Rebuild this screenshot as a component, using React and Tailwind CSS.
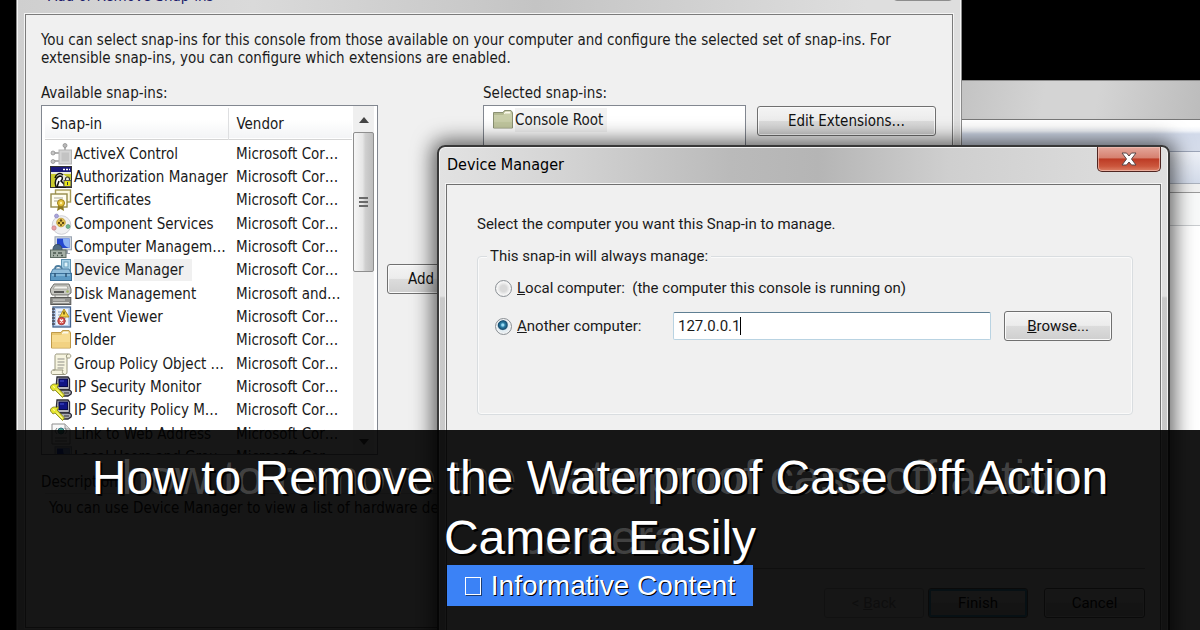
import React from "react";

const TAHOMA = "font-['DejaVu_Sans_Condensed','Noto_Sans',sans-serif]";
const DIALOG_FONT = "font-['Roboto','Liberation_Sans',sans-serif]";
const ARIAL = "font-['Liberation_Sans',Arial,sans-serif]";
const BUTTON =
  "rounded-[3px] border border-[#707070] bg-[linear-gradient(#f4f4f4_0%,#ececec_48%,#dcdcdc_50%,#cfcfcf_100%)] shadow-[inset_0_0_0_1px_#fafafa] text-[#111]";

function Icon({ children }) {
  return (
    <svg viewBox="0 0 22 22" className="h-[22px] w-[22px] shrink-0" aria-hidden="true">
      {children}
    </svg>
  );
}

function ActiveXIcon() {
  return (
    <Icon>
      <path d="M15 3v7M3 10h7M3 18h7" stroke="#9a9a9a" strokeWidth="1.5" />
      <circle cx="15" cy="2.5" r="2" fill="#b9b9b9" stroke="#888" strokeWidth=".7" />
      <circle cx="3" cy="10" r="2" fill="#c4c4c4" stroke="#888" strokeWidth=".7" />
      <circle cx="3" cy="18.500" r="2" fill="#c4c4c4" stroke="#888" strokeWidth=".7" />
      <rect x="9" y="7" width="12.500" height="14" fill="#d4d4d4" stroke="#b4b4b4" />
      <rect x="11.500" y="9.500" width="7.500" height="9" fill="#c3c3c3" />
    </Icon>
  );
}

function AuthorizationIcon() {
  return (
    <Icon>
      <rect x=".5" y=".5" width="21" height="21" fill="#e9e9df" stroke="#333" />
      <rect x="1" y="1" width="20" height="5" fill="#1b1a7a" />
      <path d="M13 3.500h2M16 3.500h2M19 3.500h1" stroke="#fff" strokeWidth="1.500" />
      <path d="M1 8h7l-3 6 1 7H1zM13 8h8v6l-4-3z" fill="#c9c92d" />
      <path d="M6 21c-2-5 0-10 4-11 3 0 3 3 1 5l3 3 1 3z" fill="#fff" stroke="#111" strokeWidth="1.500" />
      <path d="M5 12c1-4 5-6 8-3M9 15l-2 6" stroke="#111" strokeWidth="1.500" fill="none" />
      <path d="M15.500 15v-2a2 2 0 0 1 4 0v2" fill="none" stroke="#333" strokeWidth="1.200" />
      <rect x="14" y="14.500" width="7" height="6" fill="#e6e619" stroke="#555" />
      <path d="M17.500 16v3" stroke="#333" />
    </Icon>
  );
}

function CertificateIcon() {
  return (
    <Icon>
      <rect x="5.500" y="1" width="15" height="12" fill="#fdf9e2" stroke="#a59a55" strokeWidth="1.400" />
      <rect x="1" y="5" width="16" height="13" fill="#fffdf0" stroke="#958a4a" strokeWidth="1.400" />
      <path d="M4 9h9M4 12h5" stroke="#aaa89a" strokeWidth="1.200" />
      <path d="M8.500 15l-1.500 7 3.500-2 3.500 2-1-7z" fill="#8c7a22" />
      <circle cx="11" cy="14" r="3.500" fill="#e6c33c" stroke="#9a7d1a" />
      <circle cx="11" cy="14" r="1.200" fill="#fff0a0" />
    </Icon>
  );
}

function ComponentIcon() {
  return (
    <Icon>
      <circle cx="11.500" cy="12" r="9.300" fill="#f0f0f2" stroke="#cfcfd5" />
      <circle cx="11" cy="9.500" r="4.300" fill="#ecc955" stroke="#b8962f" strokeWidth=".8" />
      <circle cx="11" cy="7.500" r="1.200" fill="#5c4712" />
      <circle cx="9" cy="10" r="1.200" fill="#5c4712" />
      <circle cx="13" cy="10" r="1.200" fill="#5c4712" />
      <circle cx="11" cy="12" r="1" fill="#5c4712" />
      <circle cx="6.500" cy="3" r="2" fill="#aaa5da" stroke="#8780b8" strokeWidth=".6" />
      <circle cx="4" cy="15" r="2.200" fill="#e7a0a6" stroke="#c47880" strokeWidth=".6" />
      <circle cx="18" cy="13.500" r="2" fill="#70b58d" stroke="#4c8d68" strokeWidth=".6" />
    </Icon>
  );
}

function ComputerIcon() {
  return (
    <Icon>
      <rect x="5" y=".8" width="16.500" height="13" fill="#d3d9e1" stroke="#98a3b1" />
      <rect x="7" y="2.500" width="12.500" height="9.500" fill="#2446cf" />
      <path d="M13 2.500h6.500V12c-5-1-6.500-4-6.500-9.500z" fill="#8cb2f2" />
      <path d="M13 14h5v3h2v1h-7z" fill="#9da7b1" />
      <path d="M3 14c0-4 2-5.500 4.500-5.500S12 10 12 14" fill="#516b82" stroke="#34495d" />
      <rect x=".5" y="14" width="15.500" height="7.500" fill="#a5b0a6" stroke="#5d6b62" />
      <path d="M3 17h3M8 17h4M3 19.500h1M7 19.500h1M11 19.500h2" stroke="#48564d" strokeWidth="1.400" />
    </Icon>
  );
}

function DeviceIcon() {
  return (
    <Icon>
      <rect x="11.500" y=".5" width="9" height="14" fill="#a9d2e8" stroke="#5e93b1" />
      <rect x="14" y="3" width="4" height="5" fill="#dff3fb" stroke="#6ba0bd" />
      <path d="M5 10c0-4 6-4 7 0" fill="none" stroke="#4d7d9e" strokeWidth="1.800" />
      <path d="M3 10h16l2.500 5H.5z" fill="#90bddb" stroke="#4a7da1" />
      <rect x=".5" y="14.500" width="21" height="7" fill="#5d9ac4" stroke="#3b709a" />
      <path d="M2 16h18" stroke="#a9d3ec" />
      <path d="M5 14v4M16 14v4" stroke="#2e5577" strokeWidth="1.500" />
    </Icon>
  );
}

function DiskIcon() {
  return (
    <Icon>
      <path d="M4 1h15l2 5v4l-3 2H2L.5 9V6z" fill="#c6c6c1" stroke="#70706d" />
      <path d="M5 3h12l1 3H3z" fill="#f3f3ef" stroke="#96968f" strokeWidth=".7" />
      <path d="M4 9h10" stroke="#3b3b3b" strokeWidth="1.600" />
      <circle cx="17.500" cy="8.500" r="1.300" fill="#a4b763" />
      <path d="M5 12h13v3H5z" fill="#e6e6e2" stroke="#8a8a86" />
      <rect x=".8" y="14.500" width="20" height="7" fill="#90908d" stroke="#585856" />
      <path d="M3 17h12M3 19.500h16" stroke="#d5d5d1" />
    </Icon>
  );
}

function EventIcon() {
  return (
    <Icon>
      <rect x="3" y="1" width="17.500" height="20" fill="#b7cdec" stroke="#45648f" strokeWidth="1.300" />
      <rect x="6" y="3" width="12" height="16" fill="#edf3fb" />
      <path d="M8 6h8M8 9h8M8 12h8M8 15h8" stroke="#91a5c1" />
      <path d="M2 3h3M2 6h3M2 9h3M2 12h3M2 15h3M2 18h3" stroke="#4c4c59" strokeWidth="1.300" />
      <path d="M14 3l5 8H9.500z" fill="#f5d447" stroke="#b39122" />
      <path d="M14 5.500v3" stroke="#4a3b00" strokeWidth="1.300" />
      <circle cx="11.500" cy="15" r="3.700" fill="#d85652" stroke="#a33838" />
      <path d="M10 13.500l3 3M13 13.500l-3 3" stroke="#fff" strokeWidth="1.300" />
    </Icon>
  );
}

function FolderIcon({ green = false }) {
  return (
    <Icon>
      <path
        d="M1.500 3.500H11l1.500-2H19l1.500 2V19h-19z"
        fill={green ? "#b4ba92" : "#e8c772"}
        stroke={green ? "#8b9173" : "#bf9a49"}
      />
      <path d="M12 4l1.500-1.500h5V5H12z" fill="#fbf9ea" />
      <path d="M2 6h9l2-1.500h7V18.500H2z" fill={green ? "#c9cea9" : "#f7dc92"} />
      <path d="M2 13h18v5.500H2z" fill={green ? "#bac198" : "#efcc78"} opacity=".6" />
    </Icon>
  );
}

function PolicyIcon() {
  return (
    <Icon>
      <path d="M6 1h13c2 0 2.500 3 .5 4H17v14c0 2-1 2.500-3 2.500H2.500C.5 21 1 17 3 17h2V4c0-2 0-2 1-3z" fill="#f6f4df" stroke="#9a9880" />
      <path d="M17 5c-1-1-1-3 1-4M14 21c-2 0-2-2-1-4H3" fill="none" stroke="#9a9880" />
      <path d="M7.500 6h7M7.500 9h7M7.500 12h7M7.500 15h6" stroke="#8f8f88" />
    </Icon>
  );
}

function SecurityIcon() {
  return (
    <Icon>
      <path d="M7 1h11l1.500 2v10l-2 1H8L6 12z" fill="#b6b6be" stroke="#2b2b36" strokeWidth="1.300" />
      <rect x="9" y="3" width="8.500" height="7.500" fill="#101485" stroke="#08094b" />
      <path d="M10 5h4" stroke="#4650d5" />
      <path d="M9 14h9c3 0 4 2 3 4l-3 2h-5z" fill="#aaaab2" stroke="#2b2b36" strokeWidth="1.300" />
      <path d="M14 17h5" stroke="#333" />
      <path d="M.5 12c-.5-3 3-5 6-3.500l1.500-1 .5 1.500L7 11l7.500 8-2 2.500L5 14l-2 1z" fill="#e6e62e" stroke="#77771a" strokeWidth=".8" />
      <path d="M3 10.500l2 1M7 13.500l5.500 6" stroke="#fffdb1" />
    </Icon>
  );
}

function LinkIcon() {
  return (
    <Icon>
      <path d="M2 1h13l5 5v15H2z" fill="#f8f8f8" stroke="#8d8d8d" />
      <path d="M15 1v5h5" fill="#ddd" stroke="#999" />
      <circle cx="11" cy="8" r="3" fill="#42a88d" stroke="#326c82" />
      <path d="M7 5l-2 3 2 3M15 5l2 3-2 3M5 15h12M5 18h12" fill="none" stroke="#888" />
    </Icon>
  );
}

const snapIns = [
  ["ActiveX Control", "Microsoft Cor…", ActiveXIcon],
  ["Authorization Manager", "Microsoft Cor…", AuthorizationIcon],
  ["Certificates", "Microsoft Cor…", CertificateIcon],
  ["Component Services", "Microsoft Cor…", ComponentIcon],
  ["Computer Managem…", "Microsoft Cor…", ComputerIcon],
  ["Device Manager", "Microsoft Cor…", DeviceIcon],
  ["Disk Management", "Microsoft and…", DiskIcon],
  ["Event Viewer", "Microsoft Cor…", EventIcon],
  ["Folder", "Microsoft Cor…", FolderIcon],
  ["Group Policy Object …", "Microsoft Cor…", PolicyIcon],
  ["IP Security Monitor", "Microsoft Cor…", SecurityIcon],
  ["IP Security Policy M…", "Microsoft Cor…", SecurityIcon],
  ["Link to Web Address", "Microsoft Cor…", LinkIcon],
  ["Local Users and Grou…", "Microsoft Cor…", ComputerIcon],
];

function SnapInList() {
  return (
    <div className="flex h-[350px] w-[337px] overflow-hidden border border-[#828790] bg-white pl-[3px]">
      <div className="min-w-0 flex-1 overflow-hidden pt-[2px]">
        <table className="w-full table-fixed border-collapse text-left">
          <colgroup>
            <col className="w-[183px]" />
            <col />
          </colgroup>
          <thead>
            <tr className="h-[31px] border-b border-[#d5d5d5] bg-[linear-gradient(#fff_40%,#f3f4f6)]">
              <th className="border-r border-[#dedfe1] pt-0.5 pl-[6px] font-normal">Snap-in</th>
              <th className="pt-0.5 pl-2 font-normal">Vendor</th>
            </tr>
          </thead>
          <tbody>
            <tr className="h-[3px]" aria-hidden="true"><td colSpan="2"></td></tr>
            {snapIns.map(([name, vendor, Glyph], i) => (
              <tr key={name} className={i % 3 === 2 ? "h-6" : "h-[23px]"}>
                <td className="p-0">
                  <div className="flex h-[22px] items-center gap-[2px] pl-[5px] whitespace-nowrap">
                    <Glyph />
                    <span className={i === 5 ? "bg-[#f0f0f0] pr-2 leading-[22px]" : "leading-[22px]"}>{name}</span>
                  </div>
                </td>
                <td className="p-0 pl-2 leading-[22px] whitespace-nowrap">{vendor}</td>
              </tr>
            ))}
          </tbody>
        </table>
      </div>
      <div className="mr-[3px] ml-px flex w-[21px] flex-col items-center bg-[#efefef]" aria-hidden="true">
        <svg viewBox="0 0 10 6" className="mt-[11px] h-[6px] w-[10px]"><path d="M5 0l5 6H0z" fill="#444" /></svg>
        <div className="mt-[9px] flex h-[140px] w-full flex-col items-center justify-center gap-[2px] rounded-[2px] border border-[#8e8e8e] bg-[linear-gradient(90deg,#f6f6f6,#e6e6e6_45%,#cfcfcf_60%,#bdbdbd)]">
          <span className="h-[2px] w-[9px] bg-[#6a6a6a]" />
          <span className="h-[2px] w-[9px] bg-[#6a6a6a]" />
          <span className="h-[2px] w-[9px] bg-[#6a6a6a]" />
        </div>
        <svg viewBox="0 0 10 6" className="mt-auto mb-[9px] h-[6px] w-[10px]"><path d="M5 6l5-6H0z" fill="#444" /></svg>
      </div>
    </div>
  );
}

function ConsoleWindow() {
  return (
    <div className="absolute top-20 right-0 left-[940px] h-[600px] border-t border-[#8c8c8c] bg-white" aria-hidden="true">
      <div className="h-[39px] border-b border-[#777] bg-[linear-gradient(100deg,#c4c4c4_10%,#d4d4d4_40%,#d4d4d4_60%,#bcbcbc)]" />
      <div className="h-8 border-b border-[#9ca5b8] bg-[linear-gradient(#fff_20%,#f1f4f9_35%,#d2daea_45%,#d5dcea)]" />
      <div className="h-8 border-b border-[#aab1bd] bg-[linear-gradient(#eef1f7,#d3dbea)]" />
      <div className="h-[9px] border-b border-[#999] bg-[#f0f0f0]" />
      <div className="h-[33px] border-b border-[#c9cccf] bg-[#f8f9f9]" />
    </div>
  );
}

function SnapInsWindow() {
  return (
    <section
      className={`absolute top-[-22px] left-4 flex h-[660px] w-[946px] flex-col border-x border-[#8a8a8a] bg-[linear-gradient(90deg,#cfcfcf,#dadada_25%,#c4c4c4_55%,#dedede_90%)] px-2 shadow-[inset_1px_0_0_#f5f5f5,inset_-1px_0_0_#f5f5f5] ${TAHOMA} text-[15px] text-[#1a1a1a]`}
    >
      <header className="flex h-9 shrink-0 items-start justify-between">
        <h2 className="pt-[6px] pl-[23px] leading-6 text-[#1a1a6a]">Add or Remove Snap-ins</h2>
        <button type="button" aria-label="Close snap-ins window" className="h-[23px] w-[60px] rounded-b-[4px] border border-[#8d8d8d] bg-[#c9c9c9]" />
      </header>
      <div className="flex h-[614px] shrink-0 flex-col border border-[#7b7b7b] bg-[#f0f0f0] px-[15px] pt-4 shadow-[0_0_0_1px_#f4f4f4]">
        <p className="w-[860px] leading-[18px]">
          You can select snap-ins for this console from those available on your computer and configure the selected set of snap-ins. For
          extensible snap-ins, you can configure which extensions are enabled.
        </p>
        <div className="mt-[15px] flex items-start">
          <div>
            <h3 className="leading-[22px]">Available snap-ins:</h3>
            <div className="mt-px"><SnapInList /></div>
          </div>
          <button type="button" className={`${BUTTON} mt-[182px] ml-[9px] h-[30px] w-[86px] pl-5 text-left`}>Add &gt;</button>
          <div className="ml-[10px]">
            <h3 className="leading-[22px]">Selected snap-ins:</h3>
            <div className="mt-px h-[350px] w-[263px] border border-[#828790] bg-white pt-[2px] pl-2">
              <div className="flex items-center gap-px">
                <FolderIcon green />
                <span className="bg-[#f2f2f2] pr-1 leading-6">Console Root</span>
              </div>
            </div>
          </div>
          <button type="button" className={`${BUTTON} mt-6 ml-[11px] h-[30px] w-[179px]`}>Edit Extensions…</button>
        </div>
        <h3 className="mt-4 leading-[22px]">Description:</h3>
        <p className="ml-1 border-t border-[#ccc] pt-[3px] pl-1 leading-[22px]">You can use Device Manager to view a list of hardware devices.</p>
      </div>
    </section>
  );
}

function DeviceDialog() {
  const radio =
    "h-[17px] w-[17px] shrink-0 appearance-none rounded-full border border-[#8a8f94] bg-[radial-gradient(circle,#d9d9d9_30%,#f5f5f5_60%)] shadow-[inset_0_0_0_1px_#f4f4f4] checked:bg-[radial-gradient(circle_at_45%_40%,#9bdcf5_0_8%,#2c83ab_18%,#164d70_36%,#e4edf2_46%)]";
  return (
    <section
      role="dialog"
      aria-label="Device Manager"
      className="absolute top-[145px] left-[437px] flex h-[500px] w-[733px] flex-col rounded-t-[8px] border-2 border-[#383838] bg-[linear-gradient(#0000_0_149px,#8884_151px),linear-gradient(90deg,#e2e2e2,#d6d6d6_15%,#bababa_40%,#b5b5b5_52%,#cfcfcf_70%,#e0e0e0)] px-[7px] shadow-[0_0_20px_5px_rgba(0,0,0,0.6),inset_0_0_0_1px_#f4f4f4]"
    >
      <header className="flex h-[37px] shrink-0 items-start justify-between">
        <h2 className={`pt-[7px] pl-px ${TAHOMA} text-base leading-[22px] text-black`}>Device Manager</h2>
        <button
          type="button"
          aria-label="Close"
          className="flex h-[25px] w-16 items-center justify-center rounded-b-[5px] border border-t-0 border-[#4f2521] bg-[linear-gradient(#e4a79b_0%,#d68170_45%,#bd3b25_50%,#cb563c_80%,#dd8066)] shadow-[inset_0_0_0_1px_#f3c4b8aa]"
        >
          <svg viewBox="0 0 16 14" className="h-[14px] w-4" aria-hidden="true">
            <path d="M1 1h4.500L8 4l2.500-3H15l-4.500 6L15 13h-4.500L8 10l-2.500 3H1l4.500-6z" fill="#fff" stroke="#574646" />
          </svg>
        </button>
      </header>
      <div className={`flex flex-1 flex-col border border-[#6f6f6f] bg-[#f0f0f0] px-[15px] pt-7 shadow-[0_0_0_1px_#f4f4f4] ${DIALOG_FONT} text-[15px] text-[#1a1a1a]`}>
        <p className="pl-[15px] leading-[22px]">Select the computer you want this Snap-in to manage.</p>
        <fieldset className="mr-[12px] ml-[15px] mt-[10px] h-[170px] rounded-[4px] border border-[#d9dde0] pl-[17px] shadow-[inset_0_0_0_1px_#fafafa]">
          <legend className="-ml-2 bg-[#f0f0f0] px-[3px] leading-[22px]">This snap-in will always manage:</legend>
          <label className="mt-[10px] flex items-center gap-[5px] leading-[22px]">
            <input type="radio" name="target" className={radio} />
            <span className="whitespace-pre"><u>L</u>ocal computer:  (the computer this console is running on)</span>
          </label>
          <div className="mt-3 flex items-center">
            <label className="flex w-[178px] items-center gap-[5px] leading-[22px]">
              <input type="radio" name="target" defaultChecked className={radio} />
              <span><u>A</u>nother computer:</span>
            </label>
            <label className="flex h-7 w-[318px] cursor-text items-center rounded-[2px] border border-[#b9d3e2] border-t-[#5f7f93] bg-white pl-1">
              <input type="text" aria-label="Computer address" defaultValue="127.0.0.1" className="field-sizing-content bg-transparent p-0 outline-none" />
              <span className="h-[18px] w-px bg-black" aria-hidden="true" />
            </label>
            <button type="button" className={`${BUTTON} ml-[13px] h-[30px] w-[108px]`}><u>B</u>rowse...</button>
          </div>
        </fieldset>
        <div className="mt-[153px] flex justify-end border-t border-[#aaa] pt-[19px]">
          <button type="button" disabled className="h-[30px] w-[100px] rounded-[3px] border border-[#bbb] bg-[#f0f0f0] text-[#999]">&lt; <u>B</u>ack</button>
          <button type="button" className={`${BUTTON} ml-1 h-[30px] w-[100px] shadow-[inset_0_0_0_2px_#4fb5dc]`}>Finish</button>
          <button type="button" className={`${BUTTON} ml-4 h-[30px] w-[101px]`}>Cancel</button>
        </div>
      </div>
    </section>
  );
}

function TitleBanner() {
  return (
    <div className={`absolute inset-x-0 bottom-0 h-[200px] bg-black/91 ${ARIAL}`}>
      <div className="relative flex flex-col items-center pt-[18px]">
        <p aria-hidden="true" className="absolute inset-x-0 top-[18px] px-[60px] text-center text-5xl leading-[60px] text-white/20">
          how to remove the waterproof case off action camera
        </p>
        <h1 className="relative px-[60px] text-center text-5xl leading-[60px] text-white [text-shadow:2px_2px_0_#000]">
          How to Remove the Waterproof Case Off Action Camera Easily
        </h1>
        <p className="relative -mt-[3px] flex h-[41px] items-center gap-[10px] bg-[#3b82f6] px-[18px] text-[28px] leading-[41px] text-white [text-shadow:1px_1px_0_#000]">
          <span className="h-[18px] w-4 border border-white shadow-[1px_1px_0_#0008]" aria-hidden="true" />
          Informative Content
        </p>
      </div>
    </div>
  );
}

export default function App() {
  return (
    <main className="relative h-screen w-full overflow-hidden bg-black">
      <ConsoleWindow />
      <SnapInsWindow />
      <DeviceDialog />
      <TitleBanner />
    </main>
  );
}
